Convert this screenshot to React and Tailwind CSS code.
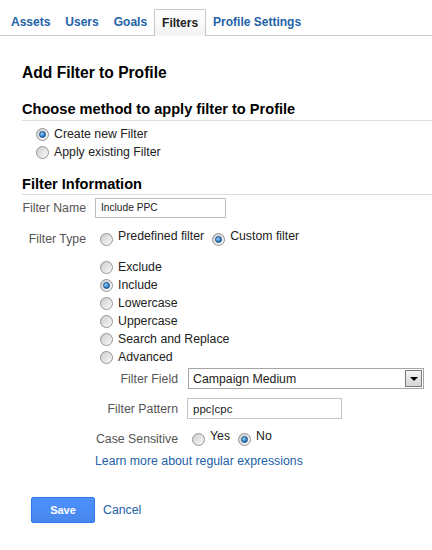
import React from 'react';

const Radio = ({ checked }) => (
  <span className="flex h-[13px] w-[13px] shrink-0 items-center justify-center rounded-full border border-[#939393] bg-linear-to-br from-[#cdcdcd] to-[#fbfbfb]">
    {checked && (
      <span className="h-[7px] w-[7px] rounded-full border border-[#1d4f86] bg-[radial-gradient(circle_at_35%_35%,#9ad6ff,#1c6fc0_70%)]" />
    )}
  </span>
);

const Option = ({ checked, label, raised }) => (
  <label className="flex items-center whitespace-nowrap">
    <Radio checked={checked} />
    <span className={`ml-[5px] text-[#222] ${raised ? 'pb-[6px]' : ''}`}>{label}</span>
  </label>
);

const tabs = [
  { id: 'assets', label: 'Assets' },
  { id: 'users', label: 'Users' },
  { id: 'goals', label: 'Goals' },
  { id: 'filters', label: 'Filters', active: true },
  { id: 'profile', label: 'Profile Settings' }
];

const filterKinds = [
  { id: 'exclude', label: 'Exclude' },
  { id: 'include', label: 'Include', checked: true },
  { id: 'lower', label: 'Lowercase' },
  { id: 'upper', label: 'Uppercase' },
  { id: 'replace', label: 'Search and Replace' },
  { id: 'advanced', label: 'Advanced' }
];

export default function App() {
  return (
    <div className="h-[550px] w-[432px] overflow-hidden bg-white font-['Liberation_Sans',Arial,sans-serif] text-[12.3px] leading-[18px]">
      {/* Tabs */}
      <div className="flex h-[36px] items-end border-b border-[#cccccc] pl-[4px]">
        {tabs.map((tab) => (
          <div
            key={tab.id}
            className={`flex h-[26px] items-center whitespace-nowrap px-[7px] text-[12px] font-bold ${
              tab.active
                ? 'mb-[-1px] ml-[-1px] h-[27px] border border-b-0 border-[#c8c8c8] bg-linear-to-b from-white to-[#f3f3f3] pb-[1px] text-[#222]'
                : 'mr-[1px] text-[#2262a8]'
            }`}
          >
            {tab.label}
          </div>
        ))}
      </div>

      <div className="pl-[22px]">
        <h1 className="mt-[27px] text-[15.6px] font-bold leading-[20px] text-black">Add Filter to Profile</h1>

        <h2 className="mt-[17px] border-b border-[#dddddd] pb-[2px] text-[14.6px] font-bold leading-[18px] text-black">
          Choose method to apply filter to Profile
        </h2>
        <div className="mt-[4px] flex flex-col pl-[14px]">
          <div className="h-[18px]"><Option checked label="Create new Filter" /></div>
          <div className="h-[18px]"><Option label="Apply existing Filter" /></div>
        </div>

        <h2 className="mt-[14px] border-b border-[#dddddd] pb-[1px] text-[14.6px] font-bold leading-[18px] text-black">
          Filter Information
        </h2>

        {/* Filter name */}
        <div className="mt-[3px] flex h-[20px] items-center">
          <span className="w-[64px] shrink-0 whitespace-nowrap text-right text-[#555]">Filter Name</span>
          <div className="ml-[9px] flex h-[20px] w-[131px] items-center border border-[#bdbdbd] px-[5px] text-[10.2px] text-[#222]">
            Include PPC
          </div>
        </div>

        {/* Filter type */}
        <div className="mt-[11px] flex h-[20px] items-center">
          <span className="w-[64px] shrink-0 whitespace-nowrap text-right text-[#555]">Filter Type</span>
          <div className="ml-[14px] flex items-center gap-[8px]">
            <Option label="Predefined filter" raised />
            <Option checked label="Custom filter" raised />
          </div>
        </div>

        <div className="mt-[9px] flex flex-col pl-[78px]">
          {filterKinds.map((kind) => (
            <div key={kind.id} className="h-[18px]">
              <Option checked={kind.checked} label={kind.label} />
            </div>
          ))}
        </div>

        {/* Filter field */}
        <div className="mt-[2px] flex h-[21px] items-center">
          <span className="ml-[73px] w-[83px] shrink-0 whitespace-nowrap text-right text-[#555]">Filter Field</span>
          <div className="ml-[10px] flex h-[21px] w-[236px] items-center justify-between border border-[#a5a5a5] pl-[4px]">
            <span className="text-[#222]">Campaign Medium</span>
            <span className="mr-[1px] flex h-[17px] w-[17px] items-center justify-center border border-[#7a7a7a] bg-linear-to-b from-[#f4f4f4] to-[#d6d6d6]">
              <span className="h-0 w-0 border-x-[4px] border-t-[4px] border-x-transparent border-t-black" />
            </span>
          </div>
        </div>

        {/* Filter pattern */}
        <div className="mt-[9px] flex h-[21px] items-center">
          <span className="ml-[73px] w-[83px] shrink-0 whitespace-nowrap text-right text-[#555]">Filter Pattern</span>
          <div className="ml-[9px] flex h-[21px] w-[155px] items-center border border-[#c4c4c4] px-[5px] text-[11.5px] text-[#222]">
            ppc|cpc
          </div>
        </div>

        {/* Case sensitive */}
        <div className="mt-[10px] flex h-[20px] items-center">
          <span className="ml-[73px] w-[83px] shrink-0 whitespace-nowrap text-right text-[#555]">Case Sensitive</span>
          <div className="ml-[14px] flex items-center gap-[8px]">
            <Option label="Yes" raised />
            <Option checked label="No" raised />
          </div>
        </div>

        <a className="mt-[3px] ml-[73px] block h-[18px] text-[#2262a8]">Learn more about regular expressions</a>

        {/* Actions */}
        <div className="mt-[27px] ml-[9px] flex items-center">
          <button className="h-[26px] w-[64px] rounded-[2px] border border-[#3079ed] bg-linear-to-b from-[#4d90fe] to-[#4787ed] text-[11px] font-bold text-white">
            Save
          </button>
          <a className="ml-[8px] text-[#2262a8]">Cancel</a>
        </div>
      </div>
    </div>
  );
}
